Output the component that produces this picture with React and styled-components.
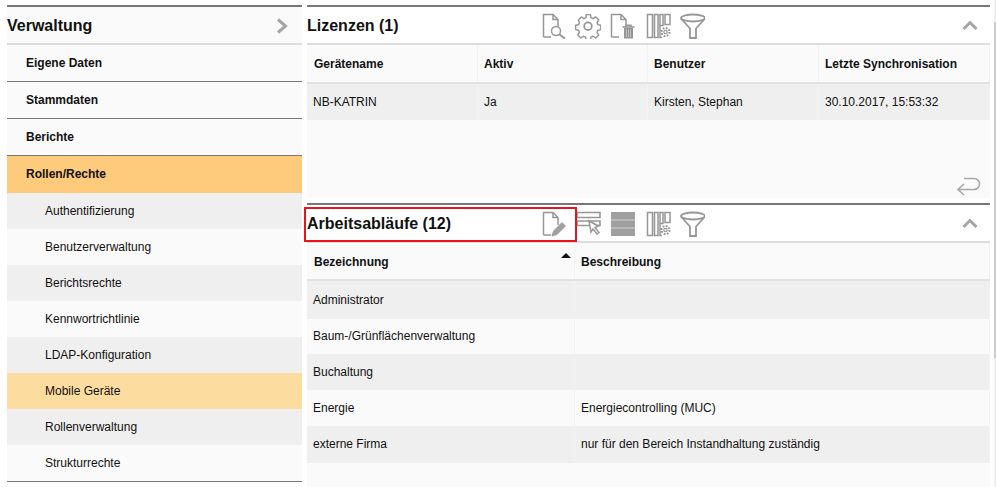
import React from "react";
import styled, { createGlobalStyle } from "styled-components";

const Global = createGlobalStyle`
  html, body { margin: 0; padding: 0; background: #fff; }
  body { width: 996px; height: 487px; overflow: hidden; font-family: "Liberation Sans", Arial, sans-serif; color: #111; }
`;
const Page = styled.div`
  display: flex; gap: 5px; padding: 5px 0 0 7px; width: 996px; height: 487px; box-sizing: border-box; overflow: hidden; position: relative;
`;
const ScrollTrack = styled.div`
  position: absolute; right: 0; top: 0; bottom: 0; width: 2px; background: #f0f0f0;
`;
const ScrollThumb = styled.div`
  position: absolute; left: 0; top: 22px; height: 336px; width: 2px; background: #cdcdcd;
`;
const Sidebar = styled.nav`
  width: 295px; flex: none; background: #fafafa; border-top: 2px solid #777; height: 477px; box-sizing: border-box;
`;
const SideHead = styled.div`
  height: 34px; padding: 2px 14px 0 0; display: flex; align-items: center; justify-content: space-between; border-bottom: 2px solid #ddd;
  font-size: 16px; font-weight: 700;
`;
const MainItem = styled.div`
  height: 36px; display: flex; align-items: center; padding-left: 19px; font-size: 12px; font-weight: 700;
  border-bottom: 1px solid ${p => (p.$active ? "#fdcb7b" : "#777")};
  background: ${p => (p.$active ? "#fdcb7b" : "transparent")};
`;
const SubItem = styled.div`
  height: 36px; display: flex; align-items: center; padding-left: 38px; font-size: 12px;
  background: ${p => (p.$active ? "#fddca0" : p.$odd ? "#efefef" : "#fafafa")};
`;
const SideEnd = styled.div`border-top: 1px solid #777;`;
const Main = styled.div`width: 683px; flex: none; display: flex; flex-direction: column;`;
const Panel = styled.section`
  background: #fafafa; border-top: 2px solid #777; height: ${p => p.$h}px; flex: none; box-sizing: border-box; display: flex; flex-direction: column;
`;
const Gap = styled.div`height: 5px; background: #fff; flex: none;`;
const PanelHead = styled.div`
  height: 36px; flex: none; display: flex; align-items: center; border-bottom: 2px solid #ddd; background: #fff; position: relative;
`;
const Title = styled.h2`margin: 0; padding-top: 2px; font-size: 16px; font-weight: 700; width: 234px; flex: none; white-space: nowrap;`;
const Tools = styled.div`display: flex; align-items: center; gap: 8px; flex: 1; padding-top: 2px;`;
const Tool = styled.svg`
  width: 26px; height: 26px; flex: none; fill: none; stroke: #969696; stroke-width: 1.5;
  margin-left: ${p => p.$shift || 0}px;
`;
const Chevron = styled.svg`width: 16px; height: 10px; margin-right: 12px; fill: none; stroke: #a5a5a5; stroke-width: 3;`;
const Mark = styled.div`
  position: absolute; left: -3px; top: 2px; width: 269px; height: 31px; border: 2px solid #e8141c; pointer-events: none;
`;
const Row = styled.div`
  display: grid; grid-template-columns: ${p => p.$cols}; height: ${p => p.$h || 36}px; flex: none;
  padding: ${p => p.$pt || 0}px 0 ${p => p.$pb || 0}px;
  background: ${p => (p.$odd ? "#efefef" : "#fafafa")};
  border-bottom: ${p => (p.$line ? "2px solid #e2e2e2" : "0")};
`;
const Cell = styled.div`
  display: flex; align-items: center; font-size: 12px; padding-left: ${p => p.$pad ?? 6}px; border-right: 1px solid #f2f2f2;
  font-weight: ${p => (p.$head ? 700 : 400)}; position: relative; white-space: nowrap;
`;
const SortArrow = styled.span`
  position: absolute; right: 3px; top: 9px; width: 0; height: 0;
  border-left: 5px solid transparent; border-right: 5px solid transparent; border-bottom: 5px solid #111;
`;
const PanelFoot = styled.div`flex: 1; display: flex; justify-content: flex-end; align-items: flex-end; padding: 0 9px 1px 0; min-height: 0;`;
const BackIcon = styled.svg`width: 25px; height: 20px; fill: none; stroke: #a8a8a8; stroke-width: 1.6;`;

const Doc = () => <path d="M2.500 24V1.500H12L17 6.500V14M12 1.500V6.500H17M2.500 24H10" />;
const Columns = () => (
  <Tool viewBox="0 0 26 26" $shift={2}>
    <path d="M2.500 1.500h5v23h-5zM9.500 1.500h3.500v23h-3.500zM15 1.500h3v11h-3zM20 1.500h5v10h-5z" />
    <path d="M15 12.500v12h2" />
    <circle cx="20.500" cy="19" r="1.700" strokeWidth="1.200" />
    <circle cx="20.500" cy="19" r="4" strokeDasharray="1.800 1.300" strokeWidth="2" />
  </Tool>
);
const Funnel = () => (
  <Tool viewBox="0 0 26 26">
    <ellipse cx="14" cy="5" rx="12" ry="3.500" strokeWidth="1.800" />
    <path d="M2 5.500L11 15.500V25H17V15.500L26 5.500" strokeWidth="1.800" />
  </Tool>
);
const Icons = {
  search: (
    <Tool viewBox="0 0 26 26">
      <Doc />
      <circle cx="15" cy="18" r="4.500" fill="#fff" />
      <path d="M18.500 21.500L24 25.500" strokeWidth="2" />
    </Tool>
  ),
  gear: (
    <Tool viewBox="0 0 26 26">
      <path d="M11 1.500h4.500l.6 3.200 2.200 1 2.700-1.800 3.200 3.200-1.800 2.700 1 2.200 3 .6v4.500l-3 .6-1 2.200 1.800 2.700-3.200 3.200-2.700-1.800-2.200 1-.6 3h-4.500l-.6-3-2.200-1-2.700 1.800-3.200-3.200 1.800-2.700-1-2.200-3-.6v-4.500l3-.6 1-2.200L2.900 7.100l3.200-3.200 2.700 1.800 2.200-1z" transform="translate(.5 .2) scale(.96)" strokeLinejoin="round" />
      <circle cx="13" cy="13.200" r="3.800" strokeWidth="1.800" />
    </Tool>
  ),
  trash: (
    <Tool viewBox="0 0 26 26">
      <Doc />
      <path d="M13.500 14h12M17 14v-1.800h5V14" />
      <path d="M15 15h9v10.500h-9z" fill="#969696" stroke="none" />
      <path d="M17.500 16.500v7.500M19.500 16.500v7.500M21.500 16.500v7.500" stroke="#d0d0d0" strokeWidth=".7" />
    </Tool>
  ),
  edit: (
    <Tool viewBox="0 0 26 26">
      <Doc />
      <path d="M11 25l1.500-5 8.500-8.500 3.500 3.500-8.500 8.500z" fill="#a0a0a0" stroke="#969696" strokeWidth=".8" />
    </Tool>
  ),
  pick: (
    <Tool viewBox="0 0 26 26">
      <path d="M2 1.500h23v5H2zM2 10h23v4.500H2z" strokeWidth="1.600" />
      <path d="M14 10l9.500 5-3.500 1.500 4 5-2 1.500-4-5-2 3z" fill="#fff" />
    </Tool>
  ),
  rows: (
    <Tool viewBox="0 0 26 26">
      <path d="M2 1h24v24H2z" fill="#a0a0a0" stroke="none" />
      <path d="M2 9h24M2 17h24" stroke="#d0d0d0" strokeWidth="1" />
    </Tool>
  ),
};
const UpChevron = () => <Chevron viewBox="0 0 16 10"><path d="M1.500 9L8 2.500 14.500 9" /></Chevron>;

const subs = ["Authentifizierung", "Benutzerverwaltung", "Berichtsrechte", "Kennwortrichtlinie", "LDAP-Konfiguration", "Mobile Geräte", "Rollenverwaltung", "Strukturrechte"];
const lizCols = "171px 170px 171px 171px";
const wfCols = "268px 415px";
const wf = [
  { name: "Administrator", text: "", h: 38, pb: 0 },
  { name: "Baum-/Grünflächenverwaltung", text: "", h: 34, pb: 1 },
  { name: "Buchaltung", text: "", h: 36, pb: 0 },
  { name: "Energie", text: "Energiecontrolling (MUC)", h: 36, pb: 0 },
  { name: "externe Firma", text: "nur für den Bereich Instandhaltung zuständig", h: 36, pb: 1 },
];

export default function App() {
  return (
    <Page>
      <Global />
      <Sidebar>
        <SideHead>
          Verwaltung
          <svg width="12" height="16" viewBox="0 0 12 16" fill="none" stroke="#a5a5a5" strokeWidth="3"><path d="M2 1.500L9.500 8 2 14.500" /></svg>
        </SideHead>
        <MainItem>Eigene Daten</MainItem>
        <MainItem>Stammdaten</MainItem>
        <MainItem>Berichte</MainItem>
        <MainItem $active>Rollen/Rechte</MainItem>
        {subs.map((s, i) => <SubItem key={s} $odd={i % 2 === 0} $active={s === "Mobile Geräte"}>{s}</SubItem>)}
        <SideEnd />
      </Sidebar>
      <Main>
        <Panel $h={193}>
          <PanelHead>
            <Title>Lizenzen (1)</Title>
            <Tools>{Icons.search}{Icons.gear}{Icons.trash}<Columns /><Funnel /></Tools>
            <UpChevron />
          </PanelHead>
          <Row $cols={lizCols} $line $h={37}>
            <Cell $head $pad={7}>Gerätename</Cell><Cell $head>Aktiv</Cell><Cell $head>Benutzer</Cell><Cell $head>Letzte Synchronisation</Cell>
          </Row>
          <Row $cols={lizCols} $odd>
            <Cell>NB-KATRIN</Cell><Cell>Ja</Cell><Cell>Kirsten, Stephan</Cell><Cell>30.10.2017, 15:53:32</Cell>
          </Row>
          <PanelFoot>
            <BackIcon viewBox="0 0 25 20"><path d="M8 1.500H18a5.500 5.500 0 0 1 0 11H2M8 7L2 12.500 8 18" /></BackIcon>
          </PanelFoot>
        </Panel>
        <Gap />
        <Panel $h={284}>
          <PanelHead>
            <Title>Arbeitsabläufe (12)</Title>
            <Tools>{Icons.edit}{Icons.pick}{Icons.rows}<Columns /><Funnel /></Tools>
            <UpChevron />
            <Mark />
          </PanelHead>
          <Row $cols={wfCols} $line $h={35} $pt={1}>
            <Cell $head $pad={7}>Bezeichnung<SortArrow /></Cell><Cell $head>Beschreibung</Cell>
          </Row>
          {wf.map((r, i) => (
            <Row key={r.name} $cols={wfCols} $odd={i % 2 === 0} $h={r.h} $pb={r.pb}>
              <Cell>{r.name}</Cell><Cell>{r.text}</Cell>
            </Row>
          ))}
        </Panel>
      </Main>
      <ScrollTrack><ScrollThumb /></ScrollTrack>
    </Page>
  );
}
